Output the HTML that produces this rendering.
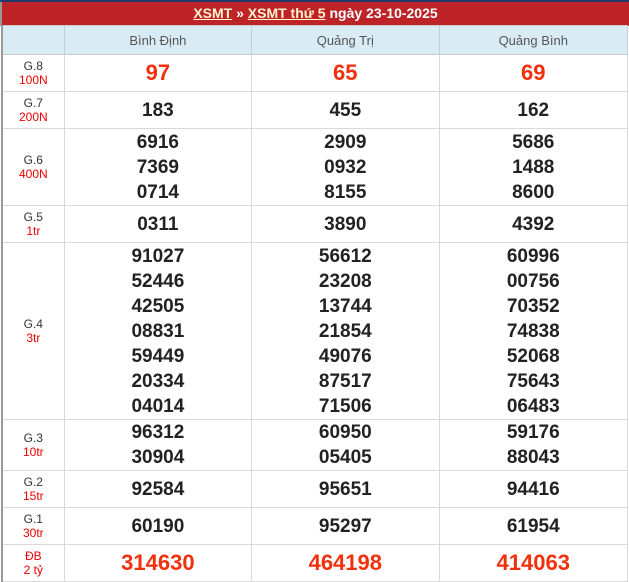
<!DOCTYPE html><html><head><meta charset="utf-8"><style>
body{margin:0;width:629px;height:577px;overflow:hidden;background:#fff;font-family:"Liberation Sans",Arial,sans-serif}
.top{position:absolute;left:0;top:0;width:629px;height:2px;background:#1d3a6e}
.hd{position:absolute;left:0;top:2px;width:627px;height:24px;background:#be2327;color:#fff;font-weight:bold;font-size:14px;text-align:center;line-height:22px;border-left:2px solid #999}
.hd u{color:#fff5d0}
table{position:absolute;left:1px;top:25px;border-collapse:collapse;table-layout:fixed;width:627px;border-left:2px solid #999}
td{border:1px solid #d9d9d9;text-align:center;padding:0;vertical-align:middle}
th{background:#d9ecf5;border:1px solid #ccc;font-weight:normal;color:#555;font-size:13px;height:28px;padding:0}
.l{font-size:12px;color:#333;line-height:14px}
.l span{color:#e00}
.n{font-size:19px;font-weight:bold;color:#222;line-height:25px}
.r{font-size:22px;font-weight:bold;color:#f3300c}
</style></head><body>
<div class="top"></div>
<div class="hd"><u>XSMT</u> » <u>XSMT thứ 5</u> ngày 23-10-2025</div>
<table>
<colgroup><col style="width:62px"><col style="width:187px"><col style="width:187px"><col style="width:188px"></colgroup>
<tr><th></th><th>Bình Định</th><th>Quảng Trị</th><th>Quảng Bình</th></tr>
<tr style="height:37px"><td class="l">G.8<br><span>100N</span></td><td class="r">97</td><td class="r">65</td><td class="r">69</td></tr>
<tr style="height:37px"><td class="l">G.7<br><span>200N</span></td><td class="n">183</td><td class="n">455</td><td class="n">162</td></tr>
<tr style="height:77px"><td class="l">G.6<br><span>400N</span></td><td class="n">6916<br>7369<br>0714</td><td class="n">2909<br>0932<br>8155</td><td class="n">5686<br>1488<br>8600</td></tr>
<tr style="height:37px"><td class="l">G.5<br><span>1tr</span></td><td class="n">0311</td><td class="n">3890</td><td class="n">4392</td></tr>
<tr style="height:177px"><td class="l">G.4<br><span>3tr</span></td><td class="n">91027<br>52446<br>42505<br>08831<br>59449<br>20334<br>04014</td><td class="n">56612<br>23208<br>13744<br>21854<br>49076<br>87517<br>71506</td><td class="n">60996<br>00756<br>70352<br>74838<br>52068<br>75643<br>06483</td></tr>
<tr style="height:51px"><td class="l">G.3<br><span>10tr</span></td><td class="n">96312<br>30904</td><td class="n">60950<br>05405</td><td class="n">59176<br>88043</td></tr>
<tr style="height:37px"><td class="l">G.2<br><span>15tr</span></td><td class="n">92584</td><td class="n">95651</td><td class="n">94416</td></tr>
<tr style="height:37px"><td class="l">G.1<br><span>30tr</span></td><td class="n">60190</td><td class="n">95297</td><td class="n">61954</td></tr>
<tr style="height:37px"><td class="l"><span>ĐB<br>2 tỷ</span></td><td class="r">314630</td><td class="r">464198</td><td class="r">414063</td></tr>
</table>
</body></html>
